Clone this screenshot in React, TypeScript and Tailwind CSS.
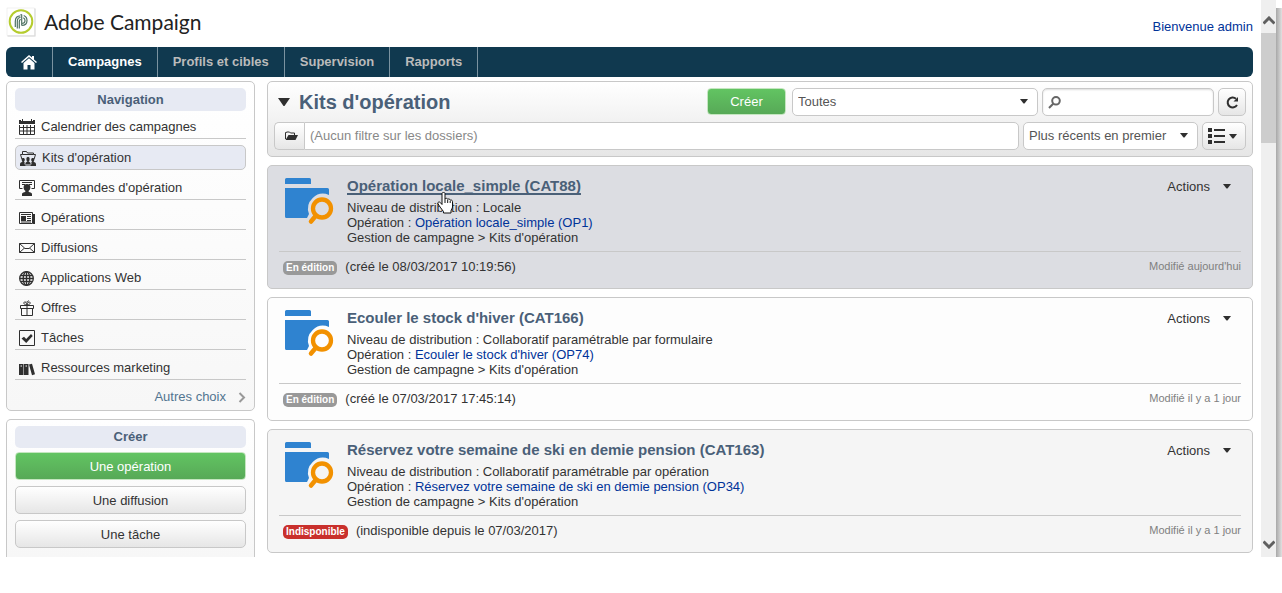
import React from 'react';

const ink = '#2f2f2f';

function Caret() {
  return (
    <svg width="8" height="5" viewBox="0 0 8 5" fill={ink} aria-hidden="true">
      <path d="M0 0h8L4.500 4.500h-1z" />
    </svg>
  );
}

function Glyph({ children }: { children: React.ReactNode }) {
  return (
    <svg width="16" height="16" viewBox="0 0 16 16" fill="none" stroke={ink} className="shrink-0" aria-hidden="true">
      {children}
    </svg>
  );
}

const icons = {
  calendar: (
    <Glyph>
      <path d="M0 1h2v1h1V0h1v2h8V0h1v2h1V1h2v4H0z" fill={ink} stroke="none" />
      <path d="M.5 6v9.500h15V6M1 8.500h14M1 12h14M4.500 6v9M8 6v9M11.500 6v9" />
    </Glyph>
  ),
  kits: (
    <Glyph>
      <path d="M2 9.500.5 4.500h2v-3h4l1 1.500h6v1.500h2l-1.500 5M2.500 4.500h11" />
      <path d="M2 8.500c1-.8 2.600-.3 2.800 1 .1.900-.3 1.500-.7 2v.6l1.300.9v3H0v-1.500c0-1.500.8-2 2.300-2.400v-.6c-.5-.5-.7-1.200-.3-3zM14 8.500c-1-.8-2.600-.3-2.800 1-.1.900.3 1.500.7 2v.6l-1.300.9v3H16v-1.500c0-1.500-.8-2-2.300-2.400v-.6c.5-.5.7-1.200.3-3z" fill={ink} stroke="none" />
      <path d="M8 6.500c1.500 0 2.200 1.100 2.100 2.600 0 1.200-.4 1.900-.9 2.400 1.300.4 1.900 1.200 1.900 3H4.900c0-1.800.6-2.600 1.900-3-.5-.5-.9-1.200-.9-2.400C5.800 7.600 6.500 6.500 8 6.500z" fill={ink} stroke="#e7eaf3" />
      <path d="M3.500 15h9" />
    </Glyph>
  ),
  orders: (
    <Glyph>
      <path d="M3.500 8.500h-3v-8h15v8h-3M3 2.500h10M3 4.500h3M10 4.500h3" />
      <path d="M8 4c2.400 0 3.400 1.300 3.400 3.200 0 1.800-.8 2.800-1.700 3.600V12c1.800.4 3.300 1 3.300 2v2H3v-2c0-1 1.500-1.600 3.300-2v-1.200C5.400 10 4.600 9 4.600 7.200 4.600 5.300 5.600 4 8 4z" fill={ink} stroke="none" />
    </Glyph>
  ),
  news: (
    <Glyph>
      <path d="M.5 2.500h13v11H.5zM2 4.500h10M8 6.500h4M8 8.500h4M8 10.500h4M2 12h10" />
      <path d="M2 6h5v5H2zM14 4h2v10h-2z" fill={ink} stroke="none" />
    </Glyph>
  ),
  mail: (
    <Glyph>
      <path d="M.5 3.500h15v9H.5zM.5 3.500l5 4.500L.5 12.500M15.500 3.500l-5 4.500 5 4.500M5.500 8.500h5" />
    </Glyph>
  ),
  globe: (
    <Glyph>
      <g strokeWidth="1.300">
        <circle cx="7.500" cy="8.500" r="6.800" />
        <ellipse cx="7.500" cy="8.500" rx="3.300" ry="6.800" />
        <path d="M7.500 2v13M1 8.500h13M2 5.500h11M2 11.500h11" />
      </g>
    </Glyph>
  ),
  gift: (
    <Glyph>
      <path d="M1.500 5.500h13v3h-13zM2.500 8.500h11v7h-11zM8 5.500v10M8 5C6 5 4.500 4 5 2.500S7.500 2.500 8 5zM8 5c2 0 3.500-1 3-2.500S8.500 2.500 8 5zM7 1.500l1 1 1.500-2" />
    </Glyph>
  ),
  task: (
    <Glyph>
      <path d="M.5.5h15v15H.5z" />
      <path d="M2.500 8.500 5 6.700l2.200 2.200L12 4l1.700 2L7.200 13z" fill={ink} stroke="none" />
    </Glyph>
  ),
  books: (
    <Glyph>
      <path d="M0 4h4.500v11H0zM5 4h4.500v11H5zM10 4.500l3-.8L16 14.200l-3 1z" fill={ink} stroke="none" />
      <path d="M1.500 6h1.500M6.500 6h1.500" stroke="#fff" />
    </Glyph>
  ),
};

const tabs = ['Campagnes', 'Profils et cibles', 'Supervision', 'Rapports'];

const nav: { label: string; icon: keyof typeof icons }[] = [
  { label: 'Calendrier des campagnes', icon: 'calendar' },
  { label: "Kits d'opération", icon: 'kits' },
  { label: "Commandes d'opération", icon: 'orders' },
  { label: 'Opérations', icon: 'news' },
  { label: 'Diffusions', icon: 'mail' },
  { label: 'Applications Web', icon: 'globe' },
  { label: 'Offres', icon: 'gift' },
  { label: 'Tâches', icon: 'task' },
  { label: 'Ressources marketing', icon: 'books' },
];

const kits = [
  {
    title: 'Opération locale_simple (CAT88)',
    level: 'Locale',
    op: 'Opération locale_simple (OP1)',
    status: 'En édition',
    note: '(créé le 08/03/2017 10:19:56)',
    modified: "Modifié aujourd'hui",
    tone: 'bg-[#dcdde2]',
    hovered: true,
  },
  {
    title: "Ecouler le stock d'hiver (CAT166)",
    level: 'Collaboratif paramétrable par formulaire',
    op: "Ecouler le stock d'hiver (OP74)",
    status: 'En édition',
    note: '(créé le 07/03/2017 17:45:14)',
    modified: 'Modifié il y a 1 jour',
    tone: 'bg-[#fdfdfd]',
    hovered: false,
  },
  {
    title: 'Réservez votre semaine de ski en demie pension (CAT163)',
    level: 'Collaboratif paramétrable par opération',
    op: 'Réservez votre semaine de ski en demie pension (OP34)',
    status: 'Indisponible',
    note: '(indisponible depuis le 07/03/2017)',
    modified: 'Modifié il y a 1 jour',
    tone: 'bg-[#f5f5f5]',
    hovered: false,
  },
];

function Logo() {
  return (
    <svg width="30" height="30" viewBox="0 0 30 30" aria-hidden="true">
      <rect x="1.500" y="1.500" width="28" height="28" fill="#d0d0d0" />
      <rect x="1" y="1" width="27.500" height="27.500" fill="#fff" stroke="#e2e2e2" strokeWidth=".5" />
      <circle cx="15" cy="14.500" r="11.300" fill="#fff" stroke="#b5cc2e" strokeWidth="2" />
      <g fill="none" stroke="#4f7263" strokeWidth="1.200">
        <path d="M11.300 21.500v-7c0-2.500 1-4 3.200-4M13.300 21.500v-6.500c0-1.500.5-2.500 1.500-2.500M15.700 7.500v11M9.300 20v-5.500c0-3.500 2-5.700 5.200-5.700M17.700 8.500c2 .8 3.300 2.600 3.300 5 0 3-2 5-5.300 5M17.200 10.800c1.200.5 1.800 1.500 1.800 2.800 0 1.700-1.100 2.900-3.300 2.900M14.500 7.500h1.200" />
      </g>
    </svg>
  );
}

function KitIcon() {
  return (
    <svg width="50" height="48" viewBox="0 0 50 48" className="shrink-0" aria-hidden="true">
      <path d="M0 1.500Q0 0 1.500 0h23Q26 0 26 1.500V6H0zM0 10h42.500Q44 10 44 11.500V17a15 15 0 0 0-20 19l-2 4H1.500Q0 40 0 38.500z" fill="#2f83d0" />
      <circle cx="37" cy="30.500" r="9" fill="none" stroke="#f29100" strokeWidth="4.300" />
      <path d="M31 37.500 26 43.500" stroke="#f29100" strokeWidth="4.500" strokeLinecap="round" />
    </svg>
  );
}

function HandCursor() {
  return (
    <svg width="17" height="22" viewBox="0 0 17 22" className="pointer-events-none absolute top-4 left-[90px]" aria-hidden="true">
      <path
        d="M5 1.500c0-1.400 3-1.400 3 0V7c.3-1.100 2.700-.9 2.700.4.5-.8 2.500-.5 2.500.9.700-.6 2.300-.2 2.300 1.200v5.500c0 1.500-1.500 2.500-1.500 4V21H6.500v-1.500C5 17.500 2.500 14.500 1 11.700c-.7-1.600 1.400-2.400 2.500-1L5 12.500z"
        fill="#fff"
        stroke="#111"
      />
      <path d="M8 7v4M10.700 8v3M13.200 9v2" stroke="#111" />
    </svg>
  );
}

const lightButton = 'cursor-pointer rounded-[5px] border border-[#c8c8c8] bg-linear-to-b from-white to-[#e6e6e6]';
const greenButton = 'cursor-pointer rounded border border-[#c4e6c0] bg-linear-to-b from-[#62c462] to-[#57a957] text-white';
const sideHeading = 'rounded-[5px] bg-[#e7eaf3] text-center font-bold text-[#4a6078]';
const field = 'h-7 w-full appearance-none rounded-[5px] border border-[#c8c8c8] bg-white text-[#555] outline-none';

function KitCard({ kit }: { kit: (typeof kits)[number] }) {
  return (
    <article className={`rounded-[5px] border border-[#c8c8c8] px-[11px] ${kit.tone}`}>
      <div className="flex items-start pt-[10px] pb-[6px] pl-[6px]">
        <div className="w-[62px] shrink-0 pt-[2px]">
          <KitIcon />
        </div>
        <div className="min-w-0 flex-1">
          <h2 className="relative text-[15px] leading-5 font-bold text-[#4a6078]">
            <a
              href="#kit"
              className={kit.hovered ? 'underline decoration-2 underline-offset-2 [text-decoration-skip-ink:none]' : ''}
            >
              {kit.title}
            </a>
            {kit.hovered && <HandCursor />}
          </h2>
          <div className="mt-1 leading-[15px]">
            <p>Niveau de distribution : {kit.level}</p>
            <p>
              Opération : <a href="#op" className="text-[#003399]">{kit.op}</a>
            </p>
            <p>Gestion de campagne &gt; Kits d'opération</p>
          </div>
        </div>
        <button type="button" className="mr-[10px] flex h-[21px] cursor-pointer items-center gap-[13px]">
          Actions
          <Caret />
        </button>
      </div>
      <div className="flex h-[37px] items-center border-t border-[#c8c8c8] pb-[6px] pl-1">
        <span
          className={`mt-[2px] rounded-[5px] px-[3px] text-[10px] leading-[14px] font-bold text-white ${
            kit.status === 'Indisponible' ? 'bg-[#c9302c]' : 'bg-[#999999]'
          }`}
        >
          {kit.status}
        </span>
        <span className="ml-2">{kit.note}</span>
        <span className="ml-auto pb-[2px] text-[11px] text-[#808080]">{kit.modified}</span>
      </div>
    </article>
  );
}

export default function App() {
  return (
    <div className="flex bg-white font-['Liberation_Sans',Arial,sans-serif] text-[13px] text-[#333]">
      <div className="min-w-0 flex-1 pr-2 pl-[6px]">
        <header className="flex h-[47px] items-center justify-between">
          <div className="flex items-center gap-2 pb-1">
            <Logo />
            <span className="font-['Lato',sans-serif] text-[21px] leading-7 text-[#222]">Adobe Campaign</span>
          </div>
          <a href="#account" className="pt-[6px] text-[#003399]">Bienvenue admin</a>
        </header>

        <nav className="flex h-[30px] overflow-hidden rounded-md bg-[#10394f] font-bold">
          <a href="#home" aria-label="Accueil" className="flex w-[47px] items-center justify-center border-r border-[#7b93a0]">
            <svg width="16" height="15" viewBox="0 0 16 15" fill="#fff" aria-hidden="true">
              <path d="M8 0 0 7l1 1 7-6 7 6 1-1-3-2.600V1h-2v1.600z" />
              <path d="M8 3.200 2.500 8v6.500h4V10h3v4.500h4V8z" />
            </svg>
          </a>
          {tabs.map((t, i) => (
            <a
              key={t}
              href={`#tab${i}`}
              className={`flex items-center border-r border-[#7b93a0] px-[15px] ${i === 0 ? 'text-white' : 'text-[#bbbbbb]'}`}
            >
              {t}
            </a>
          ))}
        </nav>

        <div className="mt-1 flex gap-3">
          <aside className="flex w-[249px] shrink-0 flex-col gap-2">
            <section className="rounded-[5px] border border-[#c8c8c8] bg-linear-to-b from-white to-[#f7f7f7] px-2 pt-[6px]">
              <h2 className={`${sideHeading} leading-[23px]`}>Navigation</h2>
              <ul>
                {nav.map((n, i) => (
                  <li key={n.label}>
                    <a
                      href={`#nav${i}`}
                      className={
                        i === 1
                          ? 'mt-[6px] flex h-[25px] items-center gap-[6px] rounded-[5px] border border-[#c8c8c8] bg-[#e7eaf3] px-1'
                          : i === 0
                            ? 'flex h-7 items-center gap-[6px] border-b border-[#c8c8c8] px-1 pt-1'
                            : 'flex h-[30px] items-center gap-[6px] border-b border-[#c8c8c8] px-1 pt-[6px]'
                      }
                    >
                      {icons[n.icon]}
                      {n.label}
                    </a>
                  </li>
                ))}
              </ul>
              <a href="#more" className="flex h-[30px] items-center justify-end gap-3 pt-1 text-[#527590]">
                Autres choix
                <svg width="8" height="11" viewBox="0 0 8 11" fill="none" stroke="#999" strokeWidth="2" aria-hidden="true">
                  <path d="M1.500 1 6 5.500 1.500 10" />
                </svg>
              </a>
            </section>

            <section className="flex flex-1 flex-col gap-[6px] rounded-t-[5px] border border-b-0 border-[#c8c8c8] bg-linear-to-b from-white to-[#f7f7f7] px-2 pt-[6px]">
              <h2 className={`${sideHeading} -mb-[2px] leading-[22px]`}>Créer</h2>
              <button type="button" className={`${greenButton} h-7 pt-px`}>Une opération</button>
              <button type="button" className={`${lightButton} h-7 pt-px`}>Une diffusion</button>
              <button type="button" className={`${lightButton} h-7 pt-px`}>Une tâche</button>
            </section>
          </aside>

          <main className="flex min-w-0 flex-1 flex-col gap-2 pb-1">
            <section className="flex flex-col gap-[6px] rounded-[5px] border border-[#c8c8c8] bg-linear-to-b from-white to-[#e6e6e6] p-[6px]">
              <div className="flex gap-1">
                <h1 className="flex flex-1 items-center gap-[9px] pl-1 text-xl leading-7 font-bold text-[#4a6078]">
                  <svg width="12" height="8" viewBox="0 0 12 8" fill={ink} aria-hidden="true">
                    <path d="M0 0h12L6.500 8h-1z" />
                  </svg>
                  Kits d'opération
                </h1>
                <button type="button" className={`${greenButton} mr-[2px] h-[27px] w-[79px]`}>Créer</button>
                <div className="relative w-[246px]">
                  <select aria-label="Filtre" className={`${field} px-[5px]`}>
                    <option>Toutes</option>
                  </select>
                  <span className="pointer-events-none absolute top-[11px] right-[10px] flex"><Caret /></span>
                </div>
                <div className="relative w-[172px]">
                  <input type="search" aria-label="Rechercher" className={`${field} pr-2 pl-6 shadow-[inset_0_1px_2px_#ddd]`} />
                  <svg width="13" height="13" viewBox="0 0 13 13" fill="none" stroke="#666" strokeWidth="2" className="pointer-events-none absolute top-2 left-[6px]" aria-hidden="true">
                    <circle cx="8" cy="4.800" r="3.800" />
                    <path d="M5.200 7.700 1 12" />
                  </svg>
                </div>
                <button type="button" aria-label="Actualiser" className={`${lightButton} flex h-7 w-7 items-center justify-center`}>
                  <svg width="13" height="13" viewBox="0 0 13 13" fill="none" stroke={ink} strokeWidth="2" aria-hidden="true">
                    <path d="M10 2.700A5 5 0 1 0 11 9" />
                    <path d="M12 1v4.500H7.500z" fill={ink} stroke="none" />
                  </svg>
                </button>
              </div>
              <div className="flex gap-1">
                <div className="flex min-w-0 flex-1">
                  <button type="button" aria-label="Dossiers" className="flex h-7 w-[30px] cursor-pointer items-center justify-center rounded-l-[5px] border border-r-0 border-[#c8c8c8] bg-linear-to-b from-white to-[#e6e6e6] pl-1">
                    <svg width="13" height="10" viewBox="0 0 13 10" fill={ink} aria-hidden="true">
                      <path d="M.5 8V1.500h1V1h3l1 1h4v2" fill="none" stroke={ink} />
                      <path d="M3.500 4H13l-2.500 5H.5z" />
                    </svg>
                  </button>
                  <input
                    type="text"
                    aria-label="Filtre sur les dossiers"
                    placeholder="(Aucun filtre sur les dossiers)"
                    className="h-7 min-w-0 flex-1 rounded-r-[5px] border border-[#c8c8c8] bg-white px-[5px] pb-[2px] outline-none placeholder:text-[#888]"
                  />
                </div>
                <div className="relative w-[175px]">
                  <select aria-label="Tri" className={`${field} px-[5px]`}>
                    <option>Plus récents en premier</option>
                  </select>
                  <span className="pointer-events-none absolute top-[11px] right-[10px] flex"><Caret /></span>
                </div>
                <button type="button" aria-label="Affichage" className={`${lightButton} flex h-7 w-11 items-center justify-center gap-1 pr-[3px]`}>
                  <svg width="17" height="16" viewBox="0 0 17 16" fill={ink} aria-hidden="true">
                    <path d="M0 0h4v4H0zM0 6h4v4H0zM0 12h4v4H0zM6 1h11v2H6zM6 7h11v2H6zM6 13h11v2H6z" />
                  </svg>
                  <Caret />
                </button>
              </div>
            </section>

            {kits.map((k) => (
              <KitCard key={k.title} kit={k} />
            ))}
          </main>
        </div>
      </div>

      <div className="flex w-[15px] shrink-0 flex-col items-center bg-[#efefef]" aria-hidden="true">
        <svg width="12" height="9" viewBox="0 0 12 9" fill="none" stroke="#606060" strokeWidth="3" className="mt-4 mb-2">
          <path d="M.5 7.500 6 2l5.500 5.500" />
        </svg>
        <div className="h-[110px] w-full bg-[#cdcdcd]" />
        <svg width="12" height="9" viewBox="0 0 12 9" fill="none" stroke="#606060" strokeWidth="3" className="mt-auto mb-2">
          <path d="M.5 1.500 6 7l5.500-5.500" />
        </svg>
      </div>
      <div className="mt-2 w-[6px] shrink-0 bg-linear-to-r from-[#a8a8a8] to-[#e0e0e0]" />
    </div>
  );
}
